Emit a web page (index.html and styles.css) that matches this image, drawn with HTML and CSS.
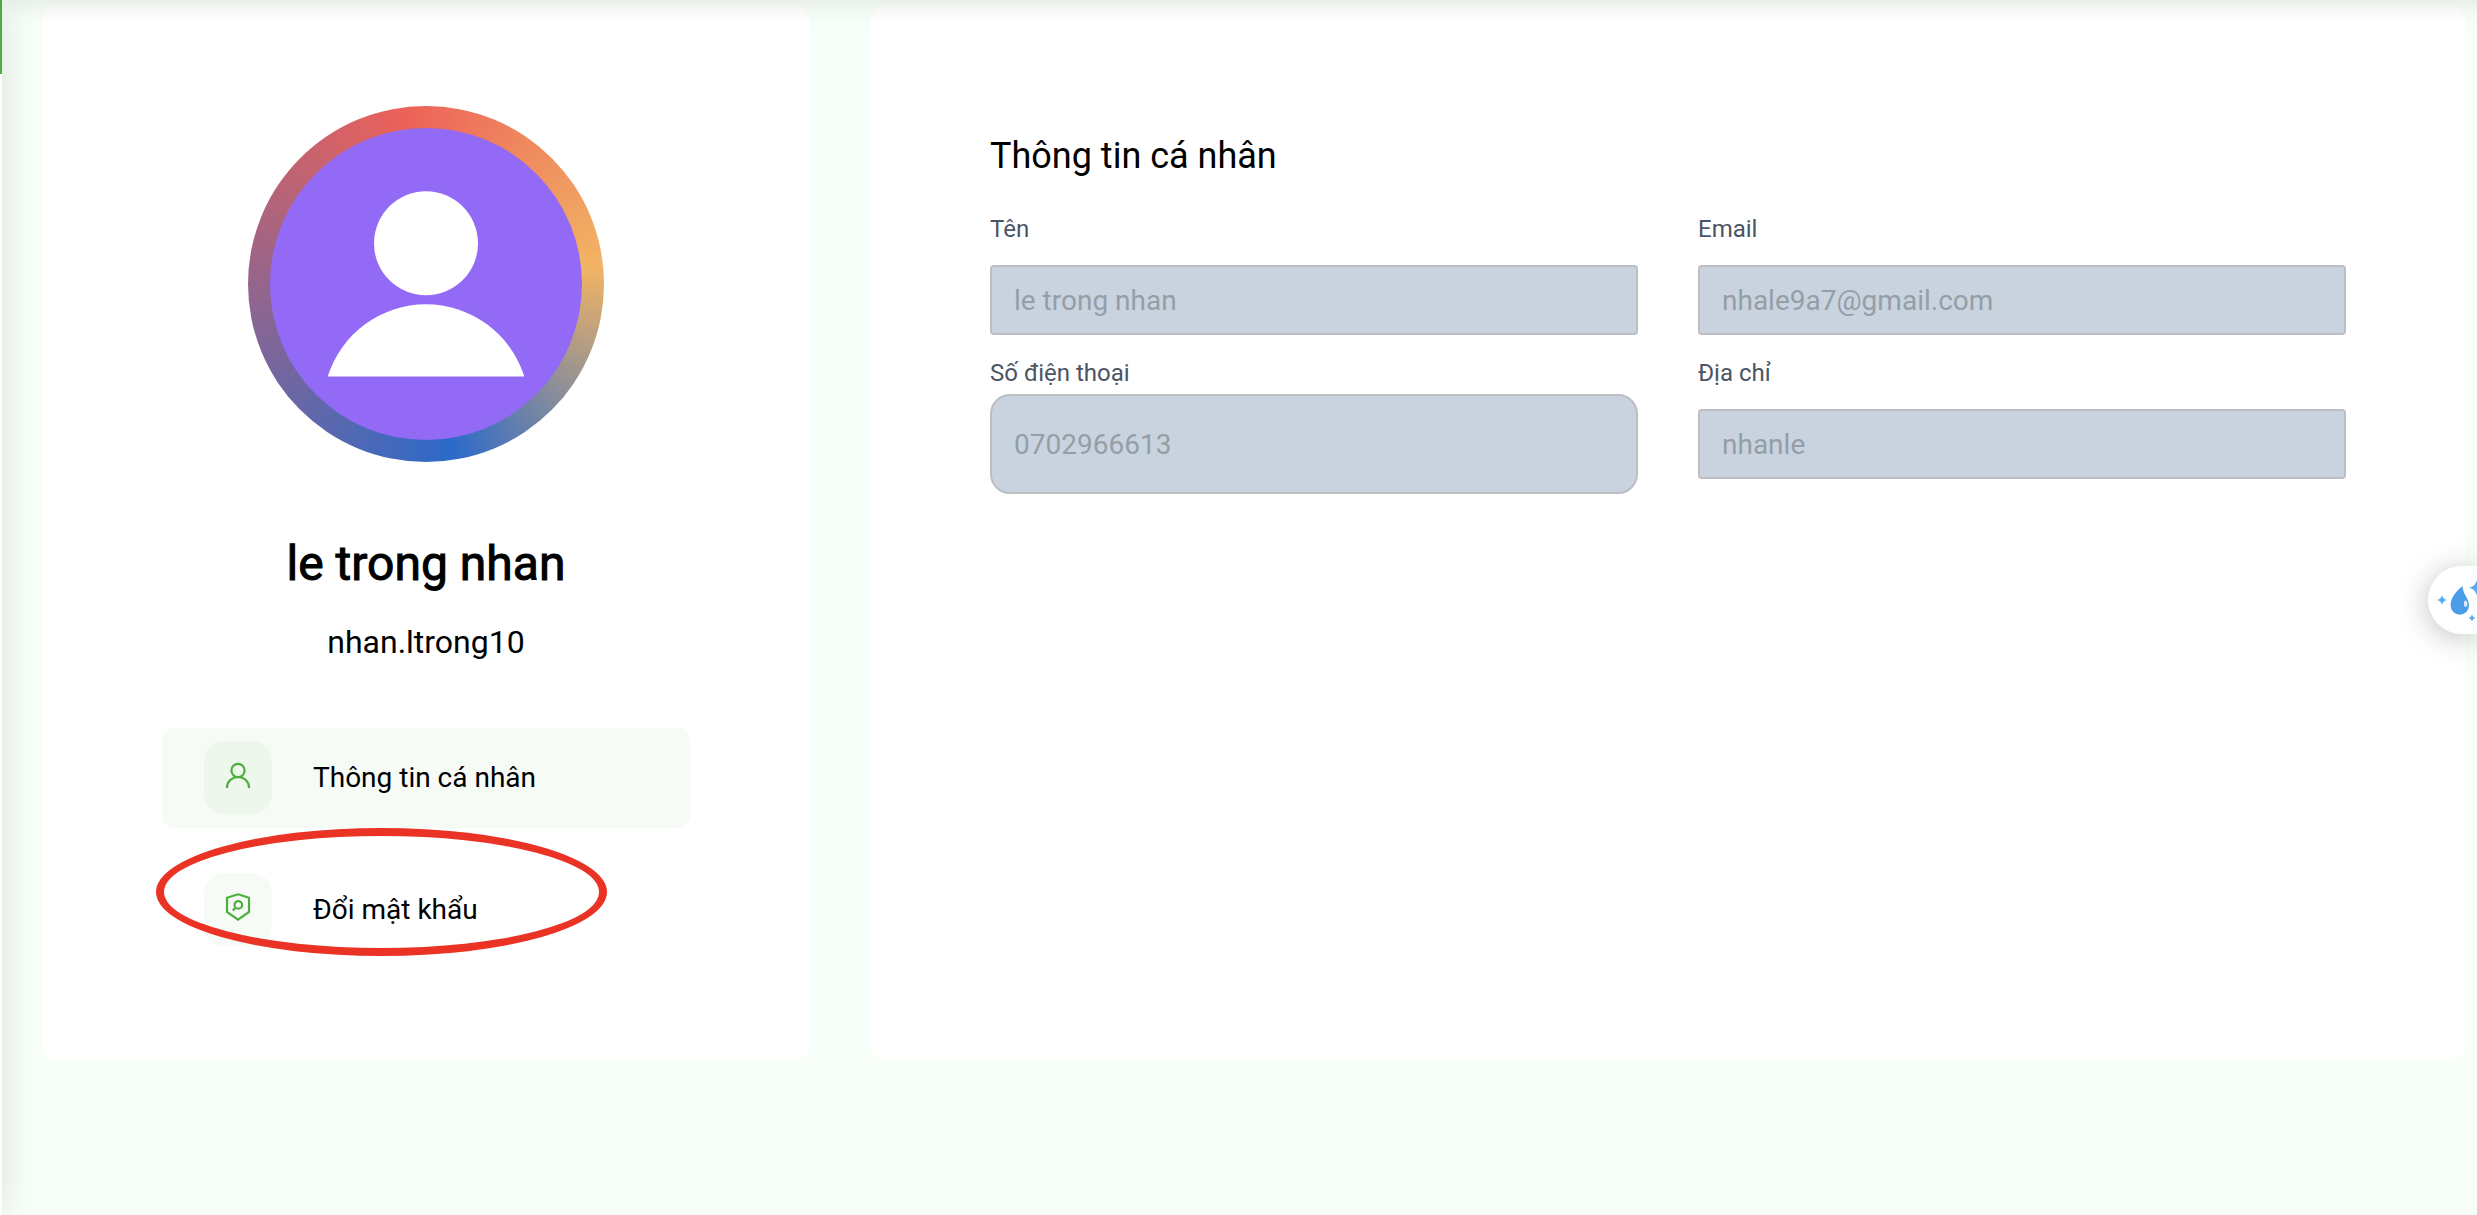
FILE: index.html
```html
<!DOCTYPE html>
<html lang="vi">
<head>
    <meta charset="UTF-8">
    <meta name="viewport" content="width=device-width, initial-scale=1.0">
    <title>Thông tin cá nhân</title>
    <link rel="stylesheet" href="styles.css">
</head>
<body>
    <div class="sidebar"><div class="sidebar-active"></div></div>

    <main class="content">
        <section class="card profile">
            <div class="avatar">
                <svg viewBox="0 0 312 312" aria-hidden="true">
                    <circle cx="156" cy="156" r="156" fill="#926af6"/>
                    <circle cx="156" cy="115.3" r="52" fill="#fff"/>
                    <path d="M57.7 248.5A103 103 0 0 1 254.3 248.5Z" fill="#fff"/>
                </svg>
            </div>
            <h1 class="name">le trong nhan</h1>
            <p class="username">nhan.ltrong10</p>
            <nav class="menu">
                <a href="#profile" class="menu-item active">
                    <span class="menu-icon">
                        <svg viewBox="0 0 32 36" aria-hidden="true">
                            <circle cx="16" cy="11.5" r="6.6"/>
                            <path d="M5 29V28.5a11 10.5 0 0 1 22 0V29"/>
                        </svg>
                    </span>
                    Thông tin cá nhân
                </a>
                <a href="#password" class="menu-item">
                    <span class="menu-icon">
                        <svg viewBox="0 0 32 36" aria-hidden="true">
                            <path d="M16 3.3L27 6.7V20.9L16 28.7L5 20.9V6.7Z"/>
                            <circle cx="16.3" cy="13.9" r="3.8"/>
                            <path d="M13.5 16.7L10.8 19.5"/>
                        </svg>
                    </span>
                    Đổi mật khẩu
                    <span class="highlight"></span>
                </a>
            </nav>
        </section>

        <section class="card info">
            <h2>Thông tin cá nhân</h2>
            <form class="form">
                <div class="field">
                    <label for="name">Tên</label>
                    <div class="control"><input type="text" id="name" value="le trong nhan" disabled></div>
                </div>
                <div class="field">
                    <label for="email">Email</label>
                    <div class="control"><input type="email" id="email" value="nhale9a7@gmail.com" disabled></div>
                </div>
                <div class="field">
                    <label for="phone">Số điện thoại</label>
                    <div class="control"><input type="tel" id="phone" class="large" value="0702966613" disabled></div>
                </div>
                <div class="field">
                    <label for="address">Địa chỉ</label>
                    <div class="control"><input type="text" id="address" value="nhanle" disabled></div>
                </div>
            </form>
        </section>
    </main>

    <button class="float-button" type="button" aria-label="Trợ lý">
        <svg viewBox="0 0 49 68" aria-hidden="true">
            <path d="M34.5 20C35 29 41 32 41 39.5A9.2 9.2 0 0 1 22.6 39.5C22.6 31 29 24.5 34.5 20Z" fill="#4c9de9"/>
            <ellipse cx="37.6" cy="37.7" rx="1.7" ry="3.3" fill="#d4e9fb"/>
            <g fill="#5aaaee">
                <path d="M14 29Q14.8 33.2 19 34Q14.8 34.8 14 39Q13.2 34.8 9 34Q13.2 33.2 14 29Z"/>
                <path d="M48.5 14.5Q49.5 20.7 56 21.7Q49.5 23 48.5 29Q47.5 23 41 21.7Q47.5 20.7 48.5 14.5Z"/>
                <path d="M44 48.5Q44.6 51.4 47.5 52Q44.6 52.6 44 55.5Q43.4 52.6 40.5 52Q43.4 51.4 44 48.5Z"/>
            </g>
        </svg>
    </button>
</body>
</html>
```
FILE: styles.css
```css
* {
    box-sizing: border-box;
}
body {
    font-family: Roboto, sans-serif;
    margin: 0;
    display: flex;
    min-height: 100vh;
    background-color: #f8fff8;
    color: #000;
    overflow: hidden;
}
/* shadow of the header that sits above the viewport */
body::before {
    content: "";
    position: fixed;
    top: -40px;
    left: 0;
    right: -40px;
    height: 40px;
    box-shadow: 0 0 30px rgba(0, 0, 0, 0.12);
    z-index: 2;
}
/* collapsed sidebar, only its edge is visible */
.sidebar {
    width: 80px;
    margin-left: -78px;
    background: #fff;
    box-shadow: 0 0 40px rgba(0, 0, 0, 0.12);
}
.sidebar-active {
    height: 74px;
    background: #4caf3c;
}
.content {
    flex: 1;
    display: grid;
    grid-template-columns: repeat(12, 1fr);
    column-gap: 60px;
    align-items: stretch;
    align-content: start;
    padding: 6px 11px 0 40px;
}
.card {
    background: #fff;
    border-radius: 16px;
}
.profile {
    grid-column: span 4;
    padding: 100px 120px;
    text-align: center;
}
.avatar {
    width: 356px;
    margin: 0 auto;
    padding: 22px;
    border-radius: 50%;
    background: conic-gradient(from -8deg, #ec6159, #f2b464 92deg, #2c6ac9 179deg, #ec6159);
}
.avatar svg {
    display: block;
    width: 100%;
}
.name {
    margin: 72px 0 0;
    font-size: 48px;
    line-height: 60px;
    font-weight: 400;
    -webkit-text-stroke: 1px #000;
}
.username {
    margin: 28px 0 0;
    font-size: 32px;
    line-height: 40px;
}
.menu {
    margin-top: 66px;
    display: flex;
    flex-direction: column;
    gap: 32px;
}
.menu-item {
    position: relative;
    display: flex;
    align-items: center;
    gap: 41px;
    height: 100px;
    padding: 0 42px 2px;
    border-radius: 12px;
    font-size: 28px;
    color: #000;
    text-decoration: none;
}
.menu-item.active {
    background: #f6fbf6;
}
.menu-icon {
    display: flex;
    align-items: center;
    justify-content: center;
    width: 68px;
    height: 73px;
    border-radius: 20px;
    background: #f6fbf6;
}
.active .menu-icon {
    background: #edf7ec;
}
.menu-icon svg {
    width: 32px;
    height: 36px;
    fill: none;
    stroke: #4caf3c;
    stroke-width: 2.2;
}
.highlight {
    position: absolute;
    top: -32px;
    left: -6px;
    width: 451px;
    height: 128px;
    border: 8px solid #ea3324;
    border-radius: 50%;
}
.info {
    grid-column: span 8;
    padding: 120px;
}
.info h2 {
    margin: 0 0 25px;
    font-size: 36px;
    line-height: 60px;
    font-weight: 400;
}
.form {
    display: grid;
    grid-template-columns: 1fr 1fr;
    gap: 5px 60px;
}
.field label {
    display: block;
    font-size: 24px;
    line-height: 36px;
    color: #4b5565;
}
.control {
    display: flex;
    align-items: center;
    height: 100px;
    margin-top: 3px;
}
.control input {
    width: 100%;
    height: 70px;
    padding: 0 22px;
    border: 2px solid #bdbdc4;
    border-radius: 4px;
    background: #c9d3e0;
    font-family: inherit;
    font-size: 28px;
    color: #949ea6;
}
.control input.large {
    height: 100px;
    border-radius: 20px;
}
.float-button {
    position: fixed;
    top: 566px;
    right: 0;
    width: 49px;
    height: 68px;
    padding: 0;
    border: none;
    border-radius: 34px 0 0 34px;
    background: #fff;
    box-shadow: 0 4px 30px rgba(0, 0, 0, 0.25);
    cursor: pointer;
}
.float-button svg {
    display: block;
    width: 49px;
    height: 68px;
}
```
